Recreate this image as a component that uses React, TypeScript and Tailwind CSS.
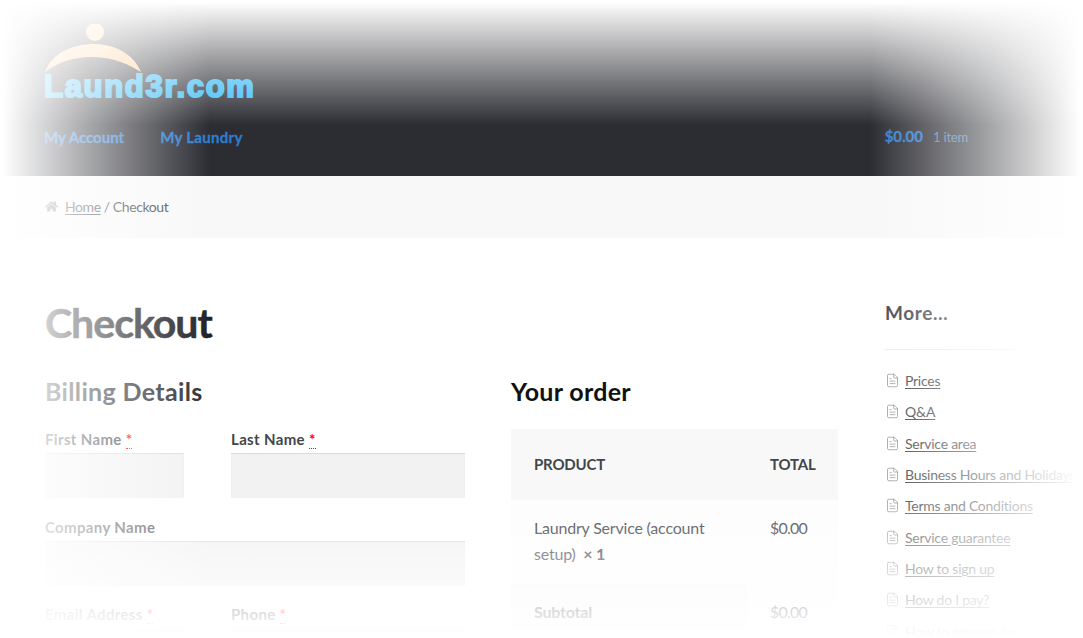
import { FileText } from "lucide-react";
import { FaHome } from "react-icons/fa";

const links = [
  "Prices",
  "Q&A",
  "Service area",
  "Business Hours and Holidays",
  "Terms and Conditions",
  "Service guarantee",
  "How to sign up",
  "How do I pay?",
  "How to prepare for",
];

function Field({ label, required, className }: { label: string; required?: boolean; className?: string }) {
  return (
    <div className={className}>
      <label className="block h-[26px] text-[15px] leading-[25px] font-bold tracking-[0.35px] text-[#43454b]">
        {label}
        {required && <span className="ml-1 border-b border-dotted border-[#ff0000] text-[#ff0000]">*</span>}
      </label>
      <div className="h-[45px] bg-[#f2f2f2] shadow-[inset_0_1px_1px_rgba(0,0,0,0.1)]" />
    </div>
  );
}

export default function App() {
  return (
    <div className="relative h-[638px] overflow-hidden bg-white font-['Lato','Noto_Sans',sans-serif] text-[#43454b]">
      <header className="h-[176px] bg-[#2c2d33] pl-[44px] pr-[115px]">
        <div className="h-[119px] pt-[24px]">
          <svg width="100" height="48" viewBox="0 0 100 48" className="block">
            <circle cx="51" cy="8" r="9" fill="#ffc680" />
            <path d="M1 48 C8 28 30 20 50 20 C70 20 90 30 97 48 C78 36 62 33 48 33 C30 33 14 38 1 48 Z" fill="#ffc680" />
          </svg>
          <div className="font-['Liberation_Sans',sans-serif] text-[31px] leading-[30px] font-bold tracking-[1.7px] text-[#35baf6] [-webkit-text-stroke:2px_#35baf6]">
            Laund3r.com
          </div>
        </div>
        <nav className="flex items-center justify-between text-[15px] leading-[34px] font-bold text-[#2c7cd0] [-webkit-text-stroke:0.3px_#2c7cd0]">
          <div className="flex gap-[36px]">
            <a>My Account</a>
            <a className="tracking-[0.3px]">My Laundry</a>
          </div>
          <div className="flex items-baseline gap-[10px]">
            <span>$0.00</span>
            <span className="text-[13px] font-normal tracking-[-0.2px] text-[#4d7fb5] [-webkit-text-stroke:0]">1 item</span>
          </div>
        </nav>
      </header>

      <div className="flex h-[62px] items-center bg-[#f8f8f8] pb-[2px] pl-[45px] text-[14px] tracking-[-0.4px] text-[#43454b]">
        <FaHome className="mr-[7px] text-[13px] text-[#737373]" />
        <a className="underline underline-offset-2">Home</a>
        <span className="ml-[3px]">/ Checkout</span>
      </div>

      <main className="flex pl-[45px] pt-[59px]">
        <div className="w-[840px] shrink-0">
          <h1 className="h-[56px] text-[41px] leading-[52px] font-bold tracking-[-1px] text-[#1f2024] [-webkit-text-stroke:0.5px_#1f2024]">
            Checkout
          </h1>
          <div className="mt-[22px] flex">
            <section className="w-[420px] shrink-0">
              <h3 className="h-[52px] text-[25px] leading-[32px] font-bold tracking-[0.35px] text-[#2c2d33]">Billing Details</h3>
              <div className="flex gap-[47px]">
                <Field label="First Name" required className="w-[139px]" />
                <Field label="Last Name" required className="w-[234px]" />
              </div>
              <Field label="Company Name" className="mt-[17px]" />
              <div className="mt-[16px] flex gap-[47px]">
                <Field label="Email Address" required className="w-[139px]" />
                <Field label="Phone" required className="w-[234px]" />
              </div>
            </section>
            <section className="ml-[46px] w-[327px] shrink-0">
              <h3 className="h-[54px] text-[25px] leading-[32px] font-bold tracking-[0.3px] text-[#111111]">Your order</h3>
              <table className="w-full border-collapse text-left text-[16px] tracking-[-0.2px]">
                <thead>
                  <tr className="h-[71px] bg-[#f8f8f8] text-[15px] font-black uppercase">
                    <th className="w-[236px] pl-[23px]">Product</th>
                    <th className="pl-[23px]">Total</th>
                  </tr>
                </thead>
                <tbody>
                  <tr className="h-[84px] bg-[#fdfdfd] align-top">
                    <td className="pl-[23px] pr-[20px] pt-[15px] leading-[26px]">
                      Laundry Service (account setup)&nbsp; <strong>× 1</strong>
                    </td>
                    <td className="pl-[23px] pt-[15px] leading-[26px] tracking-[-0.8px]">$0.00</td>
                  </tr>
                  <tr className="h-[56px]">
                    <th className="bg-[#f8f8f8] pl-[23px]">Subtotal</th>
                    <td className="bg-[#fdfdfd] pl-[23px] tracking-[-0.8px]">$0.00</td>
                  </tr>
                </tbody>
              </table>
            </section>
          </div>
        </div>

        <aside className="w-[187px] shrink-0 overflow-hidden">
          <h3 className="h-[52px] text-[19px] leading-[32px] font-bold tracking-[0.6px]">More…</h3>
          <div className="h-px w-[132px] bg-[#ececec]" />
          <ul className="mt-[15px]">
            {links.map((l) => (
              <li key={l} className="flex h-[31.3px] items-center gap-[5px] whitespace-nowrap text-[14px] tracking-[-0.25px]">
                <FileText size={15} strokeWidth={1} className="shrink-0 text-[#737373]" />
                <a className="underline underline-offset-2">{l}</a>
              </li>
            ))}
          </ul>
        </aside>
      </main>

      {/* white fade round the whole shot */}
      <div className="pointer-events-none absolute inset-0 bg-[linear-gradient(to_right,#ffffff_3px,rgba(255,255,255,0)_210px)]" />
      <div className="pointer-events-none absolute inset-0 bg-[linear-gradient(to_left,#ffffff_4px,rgba(255,255,255,0)_213px)]" />
      <div className="pointer-events-none absolute inset-x-0 top-0 h-[125px] bg-[linear-gradient(to_bottom,#ffffff_2px,rgba(255,255,255,0)_125px)]" />
      <div className="pointer-events-none absolute inset-x-0 bottom-0 h-[140px] bg-[linear-gradient(to_top,#ffffff,rgba(255,255,255,0))]" />
    </div>
  );
}
